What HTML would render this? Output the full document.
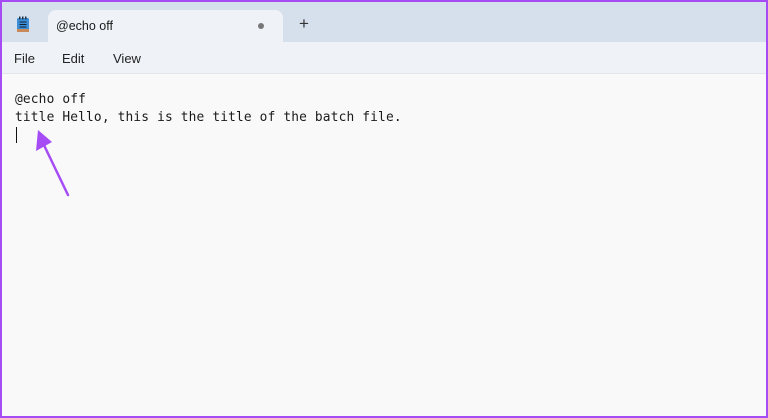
<!DOCTYPE html>
<html><head><style>
html,body{margin:0;padding:0}
body{width:768px;height:418px;position:relative;overflow:hidden;background:#f9f9f9;font-family:"Liberation Sans",sans-serif}
.frame{position:absolute;inset:0;border:2px solid #a64cf5;box-sizing:border-box;z-index:10;pointer-events:none}
.tabbar{position:absolute;left:0;top:0;width:768px;height:42px;background:#d6e0ec}
.tab{position:absolute;left:48px;top:10px;width:235px;height:32px;background:#eff3f8;border-radius:8px 8px 0 0}
.tab span{position:absolute;left:8px;top:9px;font-size:12.5px;color:#1a1a1a}
.dot{position:absolute;left:210px;top:13px;width:6px;height:6px;border-radius:50%;background:#777}
.plus{position:absolute;left:299px;top:15px;font-size:17px;color:#333;line-height:1}
.menu{position:absolute;left:0;top:42px;width:768px;height:31px;background:#eff3f8;border-bottom:1px solid #e2e6ea}
.menu span{position:absolute;top:9px;font-size:13px;color:#222}
.code{position:absolute;left:15px;top:91px;font-family:"DejaVu Sans Mono","Liberation Mono",monospace;font-size:12.85px;letter-spacing:0.16px;line-height:18px;color:#1a1a1a;white-space:pre}
.cursor{position:absolute;left:16px;top:127px;width:1px;height:16px;background:#111}
</style></head><body>
<div class="tabbar">
<svg style="position:absolute;left:16px;top:16px" width="14" height="17" viewBox="0 0 14 17"><rect x="1" y="2" width="12" height="14" rx="1.5" fill="#3a8fd8"/><rect x="1" y="13" width="12" height="3" fill="#c98a5a"/><g stroke="#123" stroke-width="1"><line x1="3.5" y1="6" x2="10.5" y2="6"/><line x1="3.5" y1="8.5" x2="10.5" y2="8.5"/><line x1="3.5" y1="11" x2="10.5" y2="11"/></g><g fill="#234"><rect x="3" y="0.5" width="1.5" height="3"/><rect x="6" y="0.5" width="1.5" height="3"/><rect x="9" y="0.5" width="1.5" height="3"/></g></svg>
<div class="tab"><span>@echo off</span><div class="dot"></div></div>
<div class="plus">+</div>
</div>
<div class="menu"><span style="left:14px">File</span><span style="left:62px">Edit</span><span style="left:113px">View</span></div>
<div class="code">@echo off
title Hello, this is the title of the batch file.</div>
<div class="cursor"></div>
<svg style="position:absolute;left:30px;top:125px" width="45" height="75" viewBox="0 0 45 75"><path d="M38 70 L12 16" stroke="#a64cf5" stroke-width="2.5" stroke-linecap="round"/><path d="M8 5 L6 26 L22 17 Z" fill="#a64cf5"/></svg>
<div class="frame"></div>
</body></html>
